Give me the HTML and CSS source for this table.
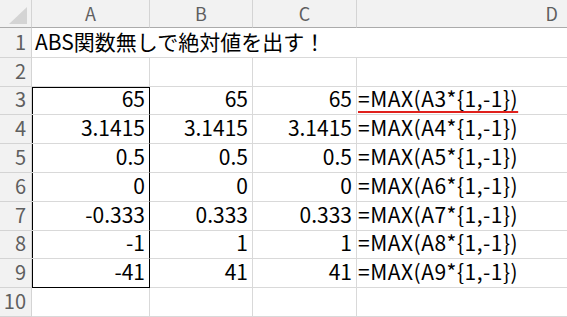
FILE: index.html
```html
<!DOCTYPE html>
<html lang="ja">
<head>
<meta charset="utf-8">
<link rel="stylesheet" href="styles.css">
</head>
<body>
<div class="sheet">
  <div class="corner"><svg width="18" height="17" viewBox="0 0 18 17"><polygon points="18,0 18,17 0,17" fill="#d4d4d4"/></svg></div>
  <div class="colhead">A</div>
  <div class="colhead">B</div>
  <div class="colhead">C</div>
  <div class="colhead last">D</div>

  <div class="rowhead">1</div>
  <div class="cell title">ABS関数無しで絶対値を出す！</div>
  <div class="cell last"></div>

  <div class="rowhead">2</div>
  <div class="cell a"></div><div class="cell"></div><div class="cell"></div><div class="cell last"></div>

  <div class="rowhead">3</div>
  <div class="cell a num boxtop">65</div><div class="cell num">65</div><div class="cell num">65</div><div class="cell last f"><span class="mark">=MAX(A3*{1,-1})</span></div>

  <div class="rowhead">4</div>
  <div class="cell a num box">3.1415</div><div class="cell num">3.1415</div><div class="cell num">3.1415</div><div class="cell last f">=MAX(A4*{1,-1})</div>

  <div class="rowhead">5</div>
  <div class="cell a num box">0.5</div><div class="cell num">0.5</div><div class="cell num">0.5</div><div class="cell last f">=MAX(A5*{1,-1})</div>

  <div class="rowhead">6</div>
  <div class="cell a num box">0</div><div class="cell num">0</div><div class="cell num">0</div><div class="cell last f">=MAX(A6*{1,-1})</div>

  <div class="rowhead">7</div>
  <div class="cell a num box">-0.333</div><div class="cell num">0.333</div><div class="cell num">0.333</div><div class="cell last f">=MAX(A7*{1,-1})</div>

  <div class="rowhead">8</div>
  <div class="cell a num box">-1</div><div class="cell num">1</div><div class="cell num">1</div><div class="cell last f">=MAX(A8*{1,-1})</div>

  <div class="rowhead">9</div>
  <div class="cell a num box boxbottom">-41</div><div class="cell num">41</div><div class="cell num">41</div><div class="cell last f">=MAX(A9*{1,-1})</div>

  <div class="rowhead">10</div>
  <div class="cell a"></div><div class="cell"></div><div class="cell"></div><div class="cell last"></div>
</div>
</body>
</html>
```

FILE: styles.css
```css
html, body {
  margin: 0;
  padding: 0;
  background: #ffffff;
  overflow: hidden;
}

.sheet {
  display: grid;
  grid-template-columns: 32px 118px 103px 104px 1fr;
  grid-template-rows: 28px 30px 29px 28px 29px 29px 29px 29px 28px 29px 29px;
  width: 567px;
  height: 317px;
  font-family: "Noto Sans CJK JP", "Noto Sans", sans-serif;
  font-size: 21px;
  color: #000;
}

.sheet > div {
  box-sizing: border-box;
  border-right: 1px solid #d9d9d9;
  border-bottom: 1px solid #d9d9d9;
  display: flex;
  align-items: flex-end;
  line-height: 1;
  white-space: nowrap;
  min-width: 0;
}

.corner {
  background: #f2f2f2;
  justify-content: flex-end;
  padding: 0 4px 3px 0;
  border-bottom-color: #ababab !important;
  border-right-color: #d4d4d4 !important;
}

.colhead {
  background: #f2f2f2;
  color: #5f5f5f;
  font-size: 18px;
  justify-content: center;
  padding-bottom: 5px;
  border-bottom-color: #ababab !important;
  border-right-color: #d4d4d4 !important;
}

.colhead.last {
  justify-content: flex-end;
  padding-right: 9px;
  border-right: none !important;
}

.rowhead {
  background: #f2f2f2;
  color: #5f5f5f;
  font-size: 20px;
  justify-content: flex-end;
  padding: 0 5px 5px 0;
  border-right-color: #d4d4d4 !important;
  border-bottom-color: #d4d4d4 !important;
}

.cell {
  padding: 0 4px 5px 3px;
}

.cell.last {
  border-right: none !important;
}

.title {
  grid-column: span 3;
  border-right: none !important;
}

.num {
  justify-content: flex-end;
}

.f {
  padding-left: 1px;
  letter-spacing: 0.5px;
}

.box {
  border-right-color: #000 !important;
  box-shadow: inset 1px 0 0 #000;
}

.boxtop {
  border-right-color: #000 !important;
  box-shadow: inset 1px 0 0 #000, inset 0 1px 0 #000;
}

.boxbottom {
  border-bottom-color: #000 !important;
}

.mark {
  text-decoration: underline;
  text-decoration-color: #e0201c;
  text-decoration-thickness: 2px;
  text-underline-offset: 4px;
}
```
